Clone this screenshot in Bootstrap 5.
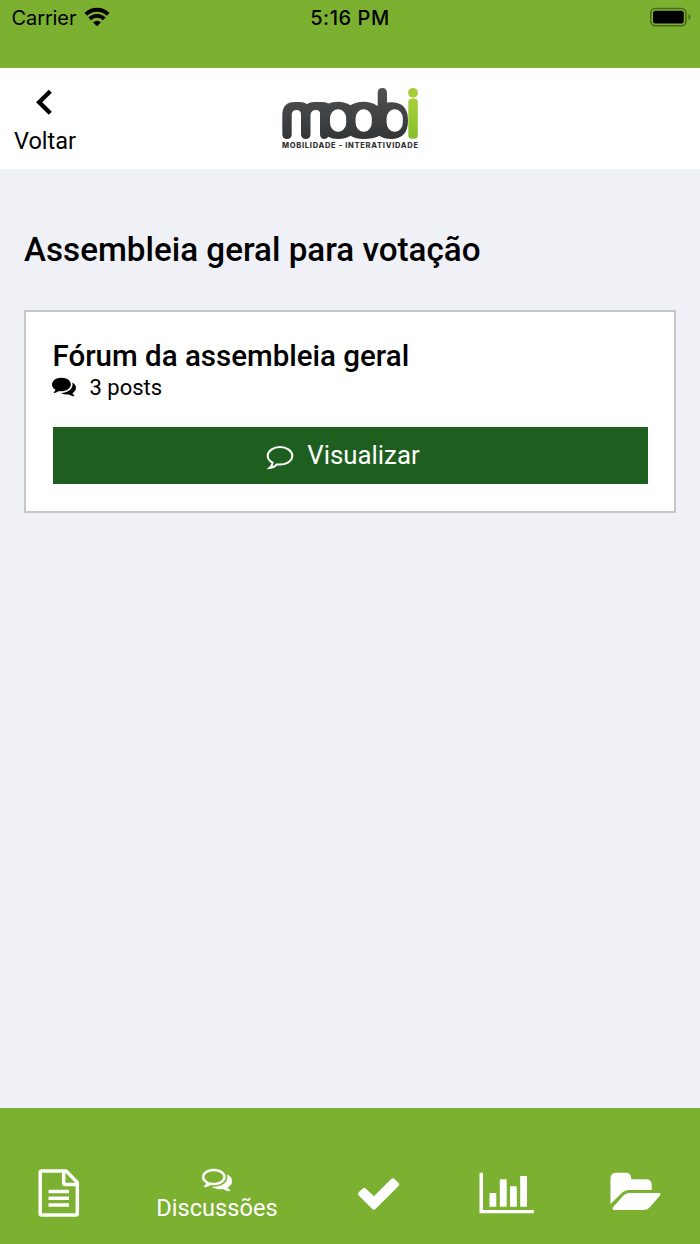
<!DOCTYPE html>
<html lang="pt-BR">
<head>
<meta charset="utf-8">
<meta name="viewport" content="width=device-width, initial-scale=1">
<title>Moobi</title>
<link href="https://cdn.jsdelivr.net/npm/bootstrap@5.3.0/dist/css/bootstrap.min.css" rel="stylesheet">
<style>
body{font-family:Roboto,sans-serif;background:#f0f1f7;color:#000;height:1244px;overflow:hidden}
svg{display:block;flex:none}
.status{height:68px;background:#7bb031;font-family:Inter,sans-serif;font-size:20px;line-height:36px}
.status-side{width:300px}
.carrier{letter-spacing:-.1px}
.clock{font-weight:500;font-size:20px;letter-spacing:.55px}
.app-header{height:101px;background:#fff}
.back{width:90px;color:#000;font-size:23.5px;line-height:28px}
.back-label{margin-top:11px}
.page-title{font-size:33.2px;line-height:40px;font-weight:500;margin:61px 0 40px}
.forum{border:2px solid #c5c6c8;border-radius:0;height:203px;padding:26px 26.5px}
.forum-title{font-size:29.5px;line-height:34px;font-weight:500;margin:1px 0 0}
.posts{font-size:22px;line-height:28px;padding-top:1px}
.btn-view{height:57px;background:#1e5f20;color:#fff;font-size:25.8px;line-height:30px;margin-top:25px}
.tabs{height:136px;background:#7bb031;color:#fff;padding-top:60px}
.tab-item{height:50px}
.tab-doc{margin-left:37px}
.tab-talk{margin-left:76px;width:122px}
.tab-check{margin-left:79px}
.tab-chart{margin-left:77px}
.tab-folder{margin-left:75px}
.tab-label{font-size:23.6px;line-height:28px}
</style>
</head>
<body class="d-flex flex-column">
<div class="status d-flex justify-content-between align-items-start">
  <div class="status-side d-flex ps-2"><span class="carrier" style="margin-left:3.500px">Carrier</span>
    <svg style="margin:6px 0 0 8px" width="26" height="21" viewBox="84 6 26 21"><path d="M97 26.300l-3.900-3.900a5.500 5.500 0 0 1 7.800 0z"/><path d="M85.800 14.300a16 16 0 0 1 22.400 0M89.700 18.900a10.400 10.400 0 0 1 14.600 0" fill="none" stroke="#000" stroke-width="3.900"/></svg>
  </div>
  <span class="clock">5:16 PM</span>
  <div class="status-side d-flex justify-content-end pe-2">
    <svg style="margin-top:7px" width="43" height="20" viewBox="649 7 43 20"><rect x="650.7" y="8.5" width="35.3" height="17.2" rx="4.5" fill="none" stroke="#496a1d" stroke-width="1.6"/><rect x="653" y="10.8" width="30.8" height="12.6" rx="2.5"/><path d="M688.5 14v6q2-1 2-3t-2-3z" fill="#496a1d"/></svg>
  </div>
</div>
<header class="app-header d-flex justify-content-between align-items-start">
  <a class="back d-flex flex-column align-items-center text-decoration-none" href="#">
    <svg style="margin-top:20px" width="18" height="28" viewBox="36 88 18 28"><path d="M50.300 91.200L39.200 102.200 50.300 113.200" fill="none" stroke="#000" stroke-width="4.400"/></svg>
    <span class="back-label">Voltar</span>
  </a>
  <svg style="margin-top:18px" width="140" height="66" viewBox="280 86 140 66" role="img" aria-label="moobi">
    <defs><linearGradient id="ink" x1="0" y1="0" x2="0" y2="1"><stop stop-color="#505152"/><stop offset="1" stop-color="#343536"/></linearGradient><linearGradient id="lime" x1="0" y1="0" x2="0" y2="1"><stop stop-color="#a6ce39"/><stop offset="1" stop-color="#86c02d"/></linearGradient></defs>
    <path fill="url(#ink)" d="M282.300 134.200V115Q282.300 102 295 102H300Q304 102 307 104Q310 102 314 102H323Q326 102 328.500 103.500Q332 101.800 338 101.800Q345 101.800 350.500 105.300Q356 101.800 363.500 101.800Q371 101.800 377.700 106V92.700Q377.700 88 382.300 88T387 92.700V102.500Q408 100 408 120.500Q408 139 391 139Q384 139 379.500 135.800Q373 139 363.500 139Q356 139 350.500 135.700Q345 139 338 139Q332 139 328.300 136.800Q326.500 139 324.500 139Q320 139 320 134.200V113.500Q320 110 316 110Q310.500 110 310.500 115.500V134.200Q310.500 138.900 305.800 138.900T301 134.200V114.500Q301 110 296.500 110Q291.700 110 291.700 115V134.200Q291.700 138.900 287 138.900T282.300 134.200z"/>
    <g fill="#fff"><rect x="330" y="109.300" width="16.200" height="22.400" rx="7.600" ry="9"/><rect x="355.600" y="109.300" width="16.200" height="22.400" rx="7.600" ry="9"/><rect x="386.600" y="109.300" width="16.200" height="22.400" rx="7.600" ry="9"/></g>
    <circle cx="413" cy="92.8" r="4.9" fill="#a6ce39"/><rect x="408.300" y="98.600" width="9.500" height="40.100" rx="3.500" fill="url(#lime)"/>
    <text x="282" y="147.700" font-family="Inter, sans-serif" font-size="7.500" font-weight="800" fill="#333" textLength="136">MOBILIDADE - INTERATIVIDADE</text>
  </svg>
  <div class="back"></div>
</header>
<main class="flex-grow-1 px-4">
  <h1 class="page-title"><span>Assembleia geral para votação</span></h1>
  <section class="card forum">
    <h2 class="forum-title"><span>Fórum da assembleia geral</span></h2>
    <div class="posts d-flex align-items-center">
      <svg style="margin:-2px 1px 0 -1px" width="24" height="22" viewBox="0 0 1792 1664" preserveAspectRatio="none"><path d="M1408 640q0 139-94 257t-256.500 186.500-353.500 68.500q-86 0-176-16-124 88-278 128-36 9-86 16h-3q-11 0-20.500-8t-11.500-21q-1-3-1-6.500t.5-6.500 2-6l2.500-5 3.500-5.500 4-5 4.500-5 4-4.500q5-6 23-25t26-29.500 22.500-29 25-38.500 20.500-44q-124-72-195-177t-71-224q0-139 94-257t256.500-186.500 353.500-68.500 353.500 68.500 256.500 186.500 94 257zm384 256q0 120-71 224.500t-195 176.500q10 24 20.500 44t25 38.500 22.500 29 26 29.500 23 25q1 1 4 4.500t4.500 5 4 5 3.500 5.500l2.500 5 2 6 .5 6.500-1 6.500q-3 14-13 22t-22 7q-50-7-86-16-154-40-278-128-90 16-176 16-271 0-472-132 58 4 88 4 161 0 309-45t264-129q125-92 192-212t67-254q0-77-23-152 129 71 204 178t75 230z"/></svg>
      <span style="margin-left:13px">3 posts</span>
    </div>
    <a class="btn-view d-flex justify-content-center align-items-center text-decoration-none" href="#">
      <svg style="margin:3px 0 0 -14px" width="28" height="25" viewBox="0 0 28 25"><path d="M14 2C7.200 2 1.700 5.900 1.700 10.800c0 3 2 5.400 4.900 6.900-.2 2.500-1.300 3.900-2.900 5.200 3.300-.3 5.600-1.600 7.300-3.500 8.500 1.200 15.300-3.100 15.300-8.600C26.300 5.900 20.800 2 14 2z" fill="none" stroke="#fff" stroke-width="2"/></svg>
      <span style="margin:-1px 0 0 13px">Visualizar</span>
    </a>
  </section>
</main>
<nav class="tabs d-flex align-items-start">
  <div class="tab-item tab-doc"><svg width="43" height="50" viewBox="37 1168 43 50" fill="none" stroke="#fff" stroke-width="3.500"><path d="M42 1170.900H66L77.300 1182.500V1213.500Q77.300 1215 75.800 1215H42Q40.200 1215 40.200 1213.500V1172.500Q40.200 1170.900 42 1170.900zM63.700 1171V1183Q63.700 1184.500 65.200 1184.500H77.500" stroke-linejoin="round"/><path d="M48.500 1191.500H69M48.500 1198.200H69M48.500 1204.900H69"/></svg></div>
  <div class="tab-item tab-talk d-flex flex-column align-items-center"><svg style="margin:-1px 0 1px 0" width="30" height="26" viewBox="0 0 1792 1664" preserveAspectRatio="none" fill="#fff"><path stroke="#fff" stroke-width="30" d="M704 256q-153 0-286 52t-211.500 141-78.500 191q0 82 53 158t149 132l97 56-35 84q34-20 62-39l44-31 53 10q78 14 153 14 153 0 286-52t211.500-141 78.500-191-78.500-191-211.500-141-286-52zm0-128q191 0 353.500 68.500t256.500 186.500 94 257-94 257-256.500 186.500-353.500 68.500q-86 0-176-16-124 88-278 128-36 9-86 16h-3q-11 0-20.500-8t-11.500-21q-1-3-1-6.500t.5-6.500 2-6l2.500-5 3.500-5.500 4-5 4.500-5 4-4.500q5-6 23-25t26-29.500 22.500-29 25-38.500 20.500-44q-124-72-195-177t-71-224q0-139 94-257t256.500-186.500 353.500-68.500zm822 1169q10 24 20.500 44t25 38.500 22.500 29 26 29.500 23 25q1 1 4 4.500t4.500 5 4 5 3.500 5.500l2.500 5 2 6 .5 6.500-1 6.500q-3 14-13 22t-22 7q-50-7-86-16-154-40-278-128-90 16-176 16-271 0-472-132 58 4 88 4 161 0 309-45t264-129q125-92 192-212t67-254q0-77-23-152 129 71 204 178t75 230q0 120-71 224.500t-195 176.500z"/></svg><span class="tab-label">Discussões</span></div>
  <div class="tab-item tab-check"><svg width="44" height="50" viewBox="357 1168 44 50" fill="#fff"><path d="M358.700 1192.300L362.700 1188.500Q364.200 1187 365.700 1188.500L373.900 1196.300 391.200 1179Q392.800 1177.500 394.400 1179L398.600 1183Q400 1184.500 398.600 1186L375.500 1209Q373.900 1210.500 372.300 1209L358.700 1195.500Q357.200 1193.900 358.700 1192.300z"/></svg></div>
  <div class="tab-item tab-chart"><svg width="56" height="50" viewBox="478 1168 56 50" fill="#fff"><path d="M479.500 1172.700H483V1210H533.800V1213.300H479.500zM489.500 1193H496.300V1206.700H489.500zM499.800 1179.300H506.700V1206.700H499.800zM510 1186.200H516.800V1206.700H510zM520.200 1176H527V1206.700H520.200z"/></svg></div>
  <div class="tab-item tab-folder"><svg width="52" height="50" viewBox="609 1168 52 50" fill="#fff"><path d="M610.500 1204V1178.500Q610.500 1172.700 616.300 1172.700H625.500Q631.200 1172.700 631.200 1178.500V1179.300H646Q651.700 1179.300 651.700 1185V1190H629.500Q624.500 1190 621 1193.700z"/><path d="M629.500 1193H659Q661.500 1193.300 660 1195.500L650.500 1206.500Q647.500 1210 643.500 1210H614Q611.500 1209.500 613.200 1207L622.500 1196.500Q625.500 1193 629.500 1193z"/></svg></div>
</nav>
<script src="https://cdn.jsdelivr.net/npm/bootstrap@5.3.0/dist/js/bootstrap.bundle.min.js"></script>
</body>
</html>
